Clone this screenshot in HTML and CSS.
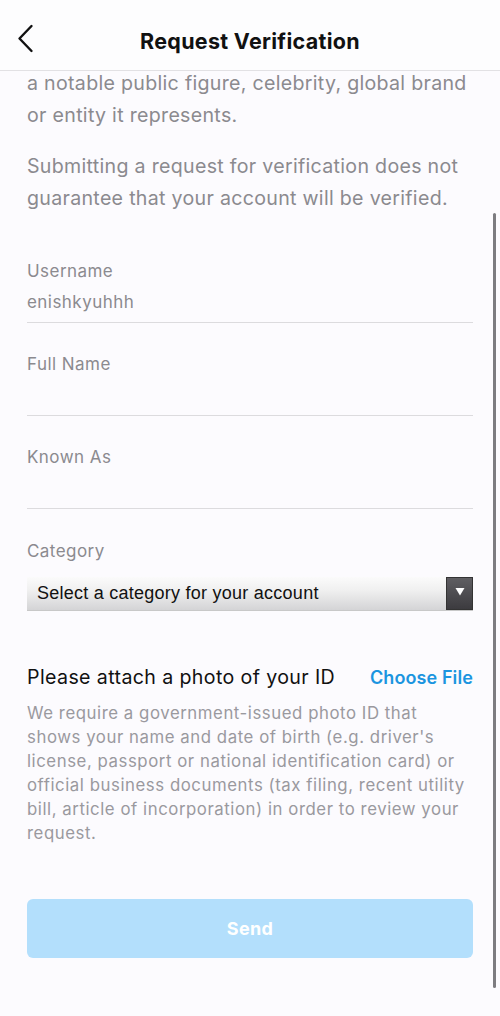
FILE: index.html
```html
<!DOCTYPE html>
<html lang="en">
<head>
<meta charset="utf-8">
<title>Request Verification</title>
<link rel="stylesheet" href="styles.css">
</head>
<body>
<div class="screen">
  <header class="header">
    <button class="back" aria-label="Back">
      <svg width="17" height="29" viewBox="0 0 17 29"><path d="M14.5 2 L2.5 14.5 L14.5 27" fill="none" stroke="#111" stroke-width="2.4" stroke-linecap="round" stroke-linejoin="round"/></svg>
    </button>
    <h1 class="title">Request Verification</h1>
  </header>
  <main class="content">
    <p class="intro first">a notable public figure, celebrity, global brand or entity it represents.</p>
    <p class="intro second">Submitting a request for verification does not guarantee that your account will be verified.</p>

    <div class="field f-user">
      <div class="label">Username</div>
      <div class="value">enishkyuhhh</div>
    </div>
    <div class="field">
      <div class="label">Full Name</div>
      <div class="value"></div>
    </div>
    <div class="field">
      <div class="label">Known As</div>
      <div class="value"></div>
    </div>
    <div class="field cat">
      <div class="label">Category</div>
      <div class="select">
        <span class="select-text">Select a category for your account</span>
        <span class="select-arrow"><svg width="10" height="9" viewBox="0 0 10 9"><path d="M0.5 1 H9.5 L5 8.5 Z" fill="#fff"/></svg></span>
      </div>
    </div>

    <div class="attach">
      <span class="attach-title">Please attach a photo of your ID</span>
      <span class="choose">Choose File</span>
    </div>
    <p class="attach-desc">We require a government-issued photo ID that shows your name and date of birth (e.g. driver's license, passport or national identification card) or official business documents (tax filing, recent utility bill, article of incorporation) in order to review your request.</p>

    <button class="send">Send</button>
  </main>
  <div class="scrollbar"></div>
</div>
</body>
</html>
```

FILE: styles.css
```css
* { box-sizing: border-box; }
html, body { margin: 0; padding: 0; }
body {
  background: #fcfbfe;
  font-family: Inter, "Noto Sans", "Liberation Sans", sans-serif;
  width: 500px;
  height: 1016px;
  overflow: hidden;
}
.screen {
  position: relative;
  height: 1016px;
}
.header {
  position: relative;
  z-index: 2;
  height: 71px;
  background: #fdfdfe;
  border-bottom: 1px solid #e2e1e4;
  display: flex;
  align-items: center;
  justify-content: center;
}
.back {
  position: absolute;
  left: 17px;
  top: 24px;
  padding: 0;
  border: 0;
  background: none;
  display: flex;
}
.title {
  margin: 0;
  font-size: 21.5px;
  font-weight: 700;
  color: #111;
  letter-spacing: 0.3px;
  padding-top: 11px;
}
.content {
  padding: 0 27px;
}
.intro {
  margin: 0;
  font-size: 19.6px;
  line-height: 32px;
  color: #8b8a8f;
  letter-spacing: 0.3px;
}
.intro.first { margin-top: -4px; }
.intro.second { margin-top: 19px; }
.field { margin-top: 30px; }
.field.f-user { margin-top: 46px; }
.label {
  font-size: 17px;
  line-height: 22px;
  color: #8b8a8f;
  letter-spacing: 0.45px;
}
.value {
  font-size: 17px;
  line-height: 30px;
  height: 41px;
  padding-top: 5px;
  color: #8b8a8f;
  letter-spacing: 0.45px;
  border-bottom: 1.5px solid #dcdbde;
}
.field.cat { margin-top: 31px; }
.select {
  margin-top: 15px;
  height: 34px;
  display: flex;
  align-items: stretch;
  background: linear-gradient(#fbfbfb, #f0f0f0 40%, #d4d4d6);
  border-bottom: 1px solid #c8c8c8;
}
.select-text {
  flex: 1;
  font-family: "Liberation Sans", Arial, sans-serif;
  font-size: 18px;
  line-height: 33px;
  color: #111;
  padding-left: 10px;
  letter-spacing: 0.25px;
}
.select-arrow {
  width: 27px;
  background: linear-gradient(#5f5e62, #3c3b3f);
  border: 1px solid #333;
  display: flex;
  align-items: center;
  justify-content: center;
  padding-bottom: 4px;
}
.attach {
  margin-top: 53px;
  display: flex;
  justify-content: space-between;
  align-items: baseline;
}
.attach-title {
  font-size: 19.6px;
  line-height: 26px;
  color: #111;
  letter-spacing: 0.38px;
}
.choose {
  font-size: 18px;
  font-weight: 600;
  color: #1b95e0;
  letter-spacing: 0.1px;
}
.attach-desc {
  margin: 11px 0 0;
  font-size: 16.8px;
  line-height: 24px;
  color: #9a999e;
  letter-spacing: 0.55px;
}
.send {
  display: block;
  width: 100%;
  margin-top: 54px;
  height: 59px;
  border: 0;
  border-radius: 6px;
  background: #b3dffc;
  color: #fff;
  font-family: inherit;
  font-size: 18px;
  font-weight: 700;
  letter-spacing: 0.3px;
}
.scrollbar {
  position: absolute;
  right: 4px;
  top: 213px;
  width: 3px;
  height: 775px;
  border-radius: 2px;
  background: #7d7c80;
}
```
